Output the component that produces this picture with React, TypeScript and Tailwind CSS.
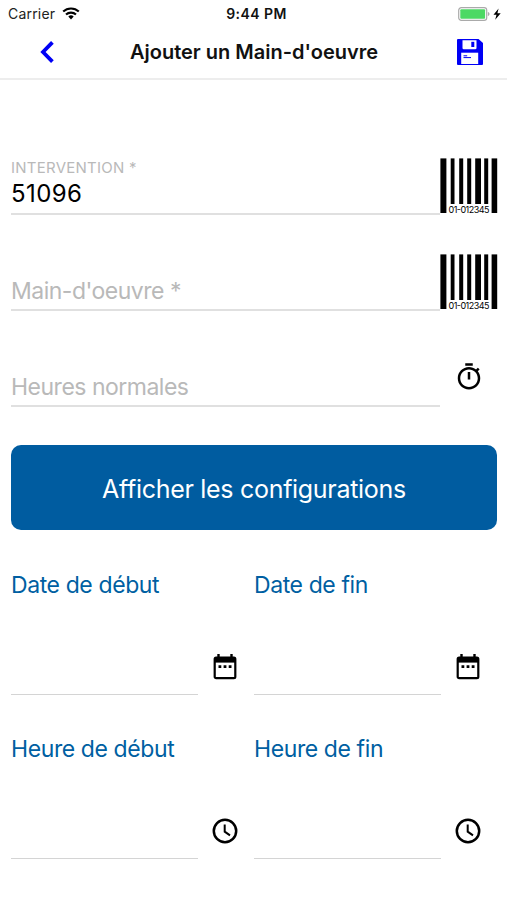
import type { ReactNode } from 'react';

const BARS = [
  { x: 0, w: 6, h: 54.6 },
  { x: 10.3, w: 3.8, h: 45.6 },
  { x: 18.8, w: 4, h: 45.6 },
  { x: 26.8, w: 4, h: 45.6 },
  { x: 34.8, w: 5.8, h: 45.6 },
  { x: 43.8, w: 4, h: 45.6 },
  { x: 51.2, w: 5.6, h: 54.6 },
];

function WifiIcon() {
  return (
    <svg className="ml-[7px] h-[13px] w-[18px]" viewBox="0 0 18 13" fill="none" stroke="#000" strokeWidth="2.1">
      <path d="M1.2 4.6a11.2 11.2 0 0 1 15.6 0" />
      <path d="M4 7.6a7.2 7.2 0 0 1 10 0" />
      <path d="M6.3 9.6a3.9 3.9 0 0 1 5.4 0L9 12.4z" fill="#000" stroke="none" />
    </svg>
  );
}

function BatteryIcon() {
  return (
    <svg className="h-[14px] w-[43px]" viewBox="0 0 43 14">
      <rect x="0.7" y="0.7" width="28" height="12.6" rx="2.6" fill="#fff" stroke="#aaa" strokeWidth="1.2" />
      <rect x="2.3" y="2.3" width="24.8" height="9.4" rx="1" fill="#4cd964" />
      <path d="M29.9 5v4c1-.3 1.6-1.1 1.6-2s-.6-1.7-1.6-2z" fill="#aaa" />
      <path d="M40.6 1.6 35.5 7.8h3L37.2 12.7l5.5-6.4h-3.3z" fill="#000" />
    </svg>
  );
}

function BackIcon() {
  return (
    <svg className="h-[22px] w-[14px]" viewBox="0 0 14 22" fill="none" stroke="#0000f5" strokeWidth="3.8">
      <path d="M12.4 1.4 3 11l9.4 9.6" />
    </svg>
  );
}

function SaveIcon() {
  return (
    <svg className="h-[26px] w-[26px]" viewBox="0 0 26 26">
      <path d="M1 0h20.5L26 4v21a1 1 0 0 1-1 1H1a1 1 0 0 1-1-1V1a1 1 0 0 1 1-1z" fill="#0000f5" />
      <path d="M5.5 1.3h14V9a1.3 1.3 0 0 1-1.3 1.3H6.8A1.3 1.3 0 0 1 5.5 9z" fill="#fff" />
      <path d="M14.3 2.8h3V8h-3z" fill="#0000f5" />
      <path d="M4.2 13.7h17V25h-17z" fill="#fff" />
      <path d="M6.5 16.8h3.7M6.5 18.6h7.5" stroke="#0000f5" strokeWidth="1" />
    </svg>
  );
}

function Barcode() {
  return (
    <svg className="h-[60px] w-[58px] shrink-0" viewBox="-0.4 -0.4 58 60">
      {BARS.map((bar) => (
        <rect key={bar.x} x={bar.x} y="0" width={bar.w} height={bar.h} fill="#000" />
      ))}
      <text x="28.6" y="54.6" textAnchor="middle" textLength="41" fontSize="9" fontFamily="Inter, sans-serif">
        01-012345
      </text>
    </svg>
  );
}

function StopwatchIcon() {
  return (
    <svg className="mt-[12px] h-[30px] w-[30px]" viewBox="0 0 24 24" fill="#000">
      <path d="M15 1H9v2h6V1zm-4 13h2V8h-2v6zm8.03-6.61 1.42-1.42c-.43-.51-.9-.99-1.41-1.41l-1.42 1.42C16.07 4.74 14.12 4 12 4c-4.97 0-9 4.03-9 9s4.02 9 9 9 9-4.03 9-9c0-2.12-.74-4.07-1.97-5.61zM12 20c-3.87 0-7-3.13-7-7s3.13-7 7-7 7 3.13 7 7-3.13 7-7 7z" />
    </svg>
  );
}

function CalendarIcon() {
  return (
    <svg className="h-[26px] w-[24px]" viewBox="0 0 24 26">
      <path d="M5.5 0v4M18.5 0v4" stroke="#000" strokeWidth="2.4" />
      <rect x="1.7" y="3.6" width="20.6" height="20.6" rx="1.4" fill="#fff" stroke="#000" strokeWidth="2.2" />
      <path d="M1.7 3.6h20.6v5H1.7z" fill="#000" />
      <path d="M5.5 11.3h2.8v2.8H5.5zM10.6 11.3h2.8v2.8h-2.8zM15.7 11.3h2.8v2.8h-2.8z" fill="#000" />
    </svg>
  );
}

function ClockIcon() {
  return (
    <svg className="h-[26px] w-[26px]" viewBox="0 0 26 26" fill="none" stroke="#000">
      <circle cx="13" cy="13" r="11.2" strokeWidth="2.5" />
      <path d="M12.7 6.5v7.2l5.3 3.6" strokeWidth="2" />
    </svg>
  );
}

type FieldProps = {
  label: string;
  value?: string;
  icon: ReactNode;
};

function Field({ label, value, icon }: FieldProps) {
  return (
    <div className="flex h-24 items-end">
      <div className="flex h-full flex-1 flex-col justify-end border-b-2 border-[#e0e0e0]">
        {value ? (
          <>
            <span className="text-[15px] leading-[18px] tracking-[0.25px] text-[#b9b9b9]">{label}</span>
            <span className="mb-[3px] mt-px text-[24px] leading-8 tracking-[0.4px] text-black">{value}</span>
          </>
        ) : (
          <span className="text-[23px] leading-9 tracking-[-0.5px] text-[#b9b9b9]">{label}</span>
        )}
      </div>
      <div className="flex h-[57px] w-[57px] items-start justify-center">{icon}</div>
    </div>
  );
}

type PickerProps = {
  label: string;
  icon: ReactNode;
};

function Picker({ label, icon }: PickerProps) {
  return (
    <div>
      <p className="text-[23px] leading-8 tracking-[-0.4px] text-[#005fa2]">{label}</p>
      <div className="flex h-[94px] items-end">
        <div className="h-full w-[187px] border-b border-[#d4d4d4]" />
        <div className="flex h-14 w-[54px] items-center justify-center">{icon}</div>
      </div>
    </div>
  );
}

export default function App() {
  return (
    <div className="min-h-[900px] w-[507px] bg-white font-['Inter',sans-serif]">
      <header className="h-20 border-b-2 border-[#ededed]">
        <div className="grid h-[27px] grid-cols-3 items-center pl-2 pr-[6px] text-[14px] text-[#222]">
          <div className="flex items-center">
            <span className="tracking-[0.2px]">Carrier</span>
            <WifiIcon />
          </div>
          <span className="pl-1 text-center font-semibold tracking-[0.45px] text-[#111]">9:44 PM</span>
          <div className="flex justify-end">
            <BatteryIcon />
          </div>
        </div>
        <div className="flex h-[50px] items-center justify-between pl-10 pr-6">
          <button type="button" aria-label="Retour">
            <BackIcon />
          </button>
          <h1 className="pr-[3px] text-[20px] font-semibold text-[#111]">Ajouter un Main-d'oeuvre</h1>
          <button type="button" aria-label="Enregistrer">
            <SaveIcon />
          </button>
        </div>
      </header>

      <main className="pl-[11px] pr-[10px] pt-[39px]">
        <Field label="INTERVENTION *" value="51096" icon={<Barcode />} />
        <Field label="Main-d'oeuvre *" icon={<Barcode />} />
        <Field label="Heures normales" icon={<StopwatchIcon />} />

        <button
          type="button"
          className="mt-[38px] h-[85px] w-full rounded-[10px] bg-[#005ca0] pt-1 text-[25px] tracking-[-0.3px] text-white"
        >
          Afficher les configurations
        </button>

        <div className="mt-[39px] grid grid-cols-2 gap-y-[38px]">
          <Picker label="Date de début" icon={<CalendarIcon />} />
          <Picker label="Date de fin" icon={<CalendarIcon />} />
          <Picker label="Heure de début" icon={<ClockIcon />} />
          <Picker label="Heure de fin" icon={<ClockIcon />} />
        </div>
      </main>
    </div>
  );
}
